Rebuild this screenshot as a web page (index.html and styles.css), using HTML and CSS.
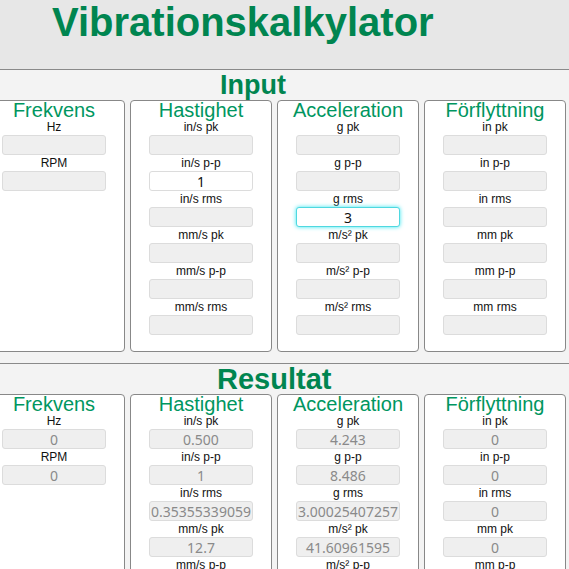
FILE: index.html
```html
<!DOCTYPE html>
<html lang="sv">
<head>
<meta charset="utf-8">
<title>Vibrationskalkylator</title>
<link rel="stylesheet" href="styles.css">
</head>
<body>
<header class="top">
  <h1 class="title">Vibrationskalkylator</h1>
</header>

<section class="section section-input">
  <h2 class="section-title title-input">Input</h2>
  <div class="boxes">
    <div class="box">
      <h3 class="box-title">Frekvens</h3>
      <label class="lbl">Hz</label><input class="fld" type="text">
      <label class="lbl">RPM</label><input class="fld" type="text">
    </div>
    <div class="box">
      <h3 class="box-title">Hastighet</h3>
      <label class="lbl">in/s pk</label><input class="fld" type="text">
      <label class="lbl">in/s p-p</label><input class="fld filled" type="text" value="1">
      <label class="lbl">in/s rms</label><input class="fld" type="text">
      <label class="lbl">mm/s pk</label><input class="fld" type="text">
      <label class="lbl">mm/s p-p</label><input class="fld" type="text">
      <label class="lbl">mm/s rms</label><input class="fld" type="text">
    </div>
    <div class="box">
      <h3 class="box-title">Acceleration</h3>
      <label class="lbl">g pk</label><input class="fld" type="text">
      <label class="lbl">g p-p</label><input class="fld" type="text">
      <label class="lbl">g rms</label><input class="fld filled focused" type="text" value="3">
      <label class="lbl">m/s² pk</label><input class="fld" type="text">
      <label class="lbl">m/s² p-p</label><input class="fld" type="text">
      <label class="lbl">m/s² rms</label><input class="fld" type="text">
    </div>
    <div class="box">
      <h3 class="box-title">Förflyttning</h3>
      <label class="lbl">in pk</label><input class="fld" type="text">
      <label class="lbl">in p-p</label><input class="fld" type="text">
      <label class="lbl">in rms</label><input class="fld" type="text">
      <label class="lbl">mm pk</label><input class="fld" type="text">
      <label class="lbl">mm p-p</label><input class="fld" type="text">
      <label class="lbl">mm rms</label><input class="fld" type="text">
    </div>
  </div>
</section>

<section class="section section-result">
  <h2 class="section-title title-result">Resultat</h2>
  <div class="boxes">
    <div class="box">
      <h3 class="box-title">Frekvens</h3>
      <label class="lbl">Hz</label><input class="fld out" type="text" value="0" readonly>
      <label class="lbl">RPM</label><input class="fld out" type="text" value="0" readonly>
    </div>
    <div class="box">
      <h3 class="box-title">Hastighet</h3>
      <label class="lbl">in/s pk</label><input class="fld out" type="text" value="0.500" readonly>
      <label class="lbl">in/s p-p</label><input class="fld out" type="text" value="1" readonly>
      <label class="lbl">in/s rms</label><input class="fld out" type="text" value="0.35355339059" readonly>
      <label class="lbl">mm/s pk</label><input class="fld out" type="text" value="12.7" readonly>
      <label class="lbl">mm/s p-p</label><input class="fld out" type="text" value="25.4" readonly>
      <label class="lbl">mm/s rms</label><input class="fld out" type="text" value="8.98025612" readonly>
    </div>
    <div class="box">
      <h3 class="box-title">Acceleration</h3>
      <label class="lbl">g pk</label><input class="fld out" type="text" value="4.243" readonly>
      <label class="lbl">g p-p</label><input class="fld out" type="text" value="8.486" readonly>
      <label class="lbl">g rms</label><input class="fld out" type="text" value="3.00025407257" readonly>
      <label class="lbl">m/s² pk</label><input class="fld out" type="text" value="41.60961595" readonly>
      <label class="lbl">m/s² p-p</label><input class="fld out" type="text" value="83.2192319" readonly>
      <label class="lbl">m/s² rms</label><input class="fld out" type="text" value="29.42244" readonly>
    </div>
    <div class="box">
      <h3 class="box-title">Förflyttning</h3>
      <label class="lbl">in pk</label><input class="fld out" type="text" value="0" readonly>
      <label class="lbl">in p-p</label><input class="fld out" type="text" value="0" readonly>
      <label class="lbl">in rms</label><input class="fld out" type="text" value="0" readonly>
      <label class="lbl">mm pk</label><input class="fld out" type="text" value="0" readonly>
      <label class="lbl">mm p-p</label><input class="fld out" type="text" value="0" readonly>
      <label class="lbl">mm rms</label><input class="fld out" type="text" value="0" readonly>
    </div>
  </div>
</section>
</body>
</html>
```

FILE: styles.css
```css
html {
  overflow: hidden;
}

body {
  margin: 0;
  background: #f3f3f3;
  font-family: "Liberation Sans", Arial, sans-serif;
  color: #111;
}

.top {
  background: #e7e7e7;
  border-bottom: 1px solid #8a8a8a;
  height: 70px;
  box-sizing: border-box;
  padding: 2px 0 0 52px;
}

.title {
  margin: 0;
  font-size: 40px;
  line-height: 40px;
  font-weight: bold;
  color: #008550;
}

.section {
  padding-bottom: 11px;
}

.section-result {
  border-top: 1px solid #8a8a8a;
}

.section-title {
  margin: 0;
  height: 30px;
  line-height: 30px;
  font-weight: bold;
  color: #008550;
}

.title-input {
  font-size: 27px;
  padding-left: 220px;
}

.title-result {
  font-size: 29px;
  padding-left: 217px;
}

.boxes {
  display: flex;
  gap: 5px;
  margin-left: -17px;
  align-items: stretch;
}

.box {
  flex: 0 0 142px;
  box-sizing: border-box;
  background: #fff;
  border: 1px solid #888;
  border-radius: 4px;
  padding: 0 0 16px;
  display: flex;
  flex-direction: column;
  align-items: center;
}

.box-title {
  margin: 0;
  font-size: 20px;
  line-height: 18px;
  font-weight: normal;
  color: #009660;
}

.lbl {
  display: block;
  font-size: 12px;
  line-height: 16px;
  color: #111;
  text-align: center;
}

.fld {
  display: block;
  box-sizing: border-box;
  width: 104px;
  height: 20px;
  margin: 0;
  padding: 0;
  border: 1px solid #dcdcdc;
  border-radius: 3px;
  background: #efefef;
  font-family: "Noto Sans", "Open Sans", sans-serif;
  font-size: 14px;
  text-align: center;
  color: #111;
  outline: none;
}

.filled {
  background: #fff;
}

.focused {
  border-color: #4fd8e0;
  box-shadow: 0 0 4px #35e6f0;
}

.out {
  color: #8a8a8a;
}
```
